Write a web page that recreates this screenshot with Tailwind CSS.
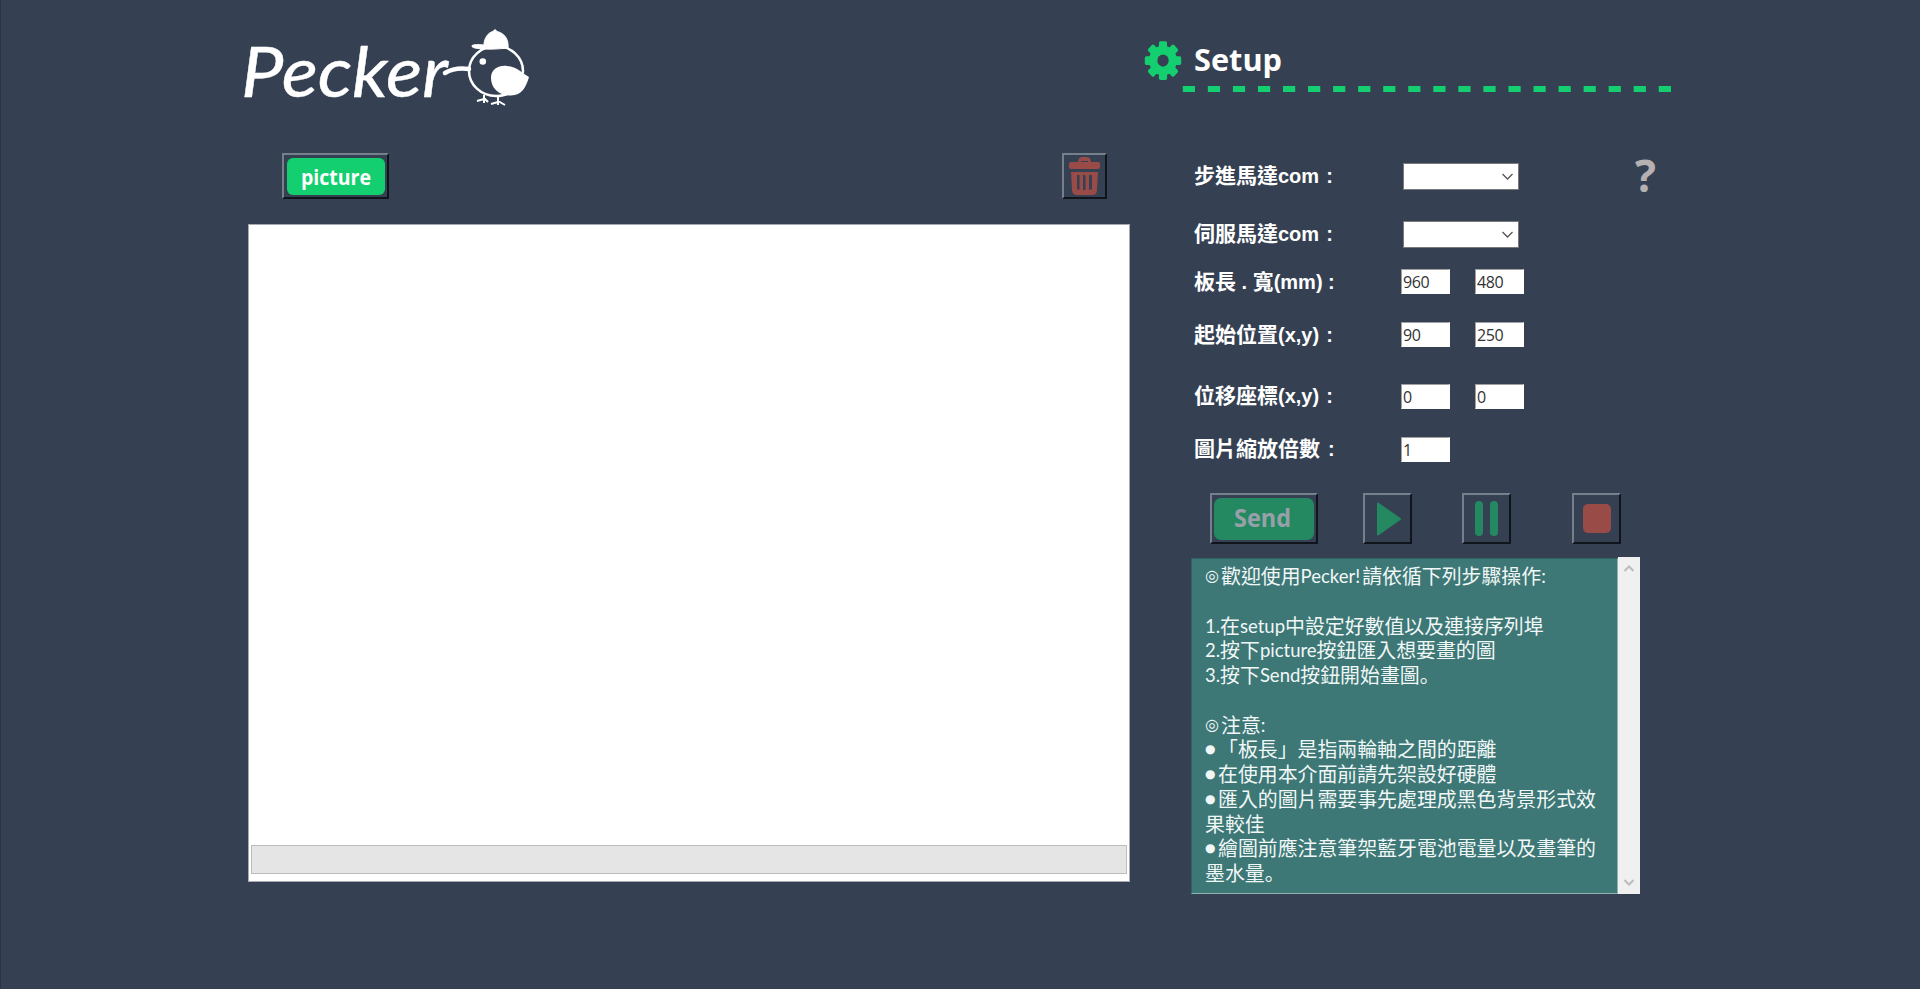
<!DOCTYPE html>
<html lang="zh-Hant">
<head>
<meta charset="utf-8">
<title>Pecker</title>
<script src="https://cdn.jsdelivr.net/npm/@tailwindcss/browser@4"></script>
</head>
<body class="w-[1920px] h-[989px] overflow-hidden bg-[#354153] border-l border-[#2a3444] font-['Liberation_Sans','Noto_Sans_CJK_TC',sans-serif]">
<div class="flex pl-[243px]">

  <!-- Canvas column -->
  <main class="w-[887px] pt-[24px]">
    <svg class="block w-[300px] h-[90px] overflow-visible" viewBox="244 24 300 90" fill="none" stroke="#fff" aria-label="Pecker">
      <text x="241" y="97" textLength="207" lengthAdjust="spacingAndGlyphs" font-family="Lato, sans-serif" font-style="italic" font-size="69" fill="#fff" stroke="#fff" stroke-width="0.400" stroke-linejoin="round">Pecker</text>
      <path d="M445 73 Q455 67 469 69" stroke-width="4.500" stroke-linecap="round"/>
      <ellipse cx="496" cy="71" rx="27" ry="25" stroke-width="2.500"/>
      <path d="M484 48 C483 38 489 32 493 31.500 Q495 28 497 31.500 C504 33 509 39 508 48 Q490 50 479 48.500 Q471 48 472 45.500 Q475 44 484 45Z" fill="#fff" stroke-width="1"/>
      <circle cx="482.800" cy="61.500" r="3.300" fill="#fff" stroke="none"/>
      <path d="M491 78 C491 69 499 65 507 66 C518 67 521 73 529 77 C526 87 522 95.500 511 95.500 C498 96 491 87 491 78Z" fill="#fff" stroke="none"/>
      <path d="M484 95v8M484 99l-7 2M484 98l4 4M498 96v9M498 102l-7 2M498 101l7 4" stroke-width="2"/>
    </svg>

    <div class="flex justify-between pt-[39px] pl-[38px] pr-[24px]">
      <button class="w-[107px] h-[46px] border-2 border-t-[#76808d] border-l-[#76808d] border-r-[#10151c] border-b-[#10151c] flex items-center justify-center">
        <svg class="block w-[98px] h-[37px]" viewBox="0 0 98 37"><rect width="98" height="37" rx="6" fill="#14cf6f"/><text x="14" y="26.500" textLength="70" lengthAdjust="spacingAndGlyphs" font-family="Open Sans, sans-serif" font-weight="700" font-size="21.500" fill="#fff">picture</text></svg>
      </button>
      <button class="w-[45px] h-[46px] border-2 border-t-[#76808d] border-l-[#76808d] border-r-[#10151c] border-b-[#10151c] flex items-center justify-center" aria-label="Delete">
        <svg class="block w-[31px] h-[38px]" viewBox="0 0 31 38" fill="#984b47"><path d="M9 6 Q9 0 13 0h5q4 0 4 6h-3V4h-7v2z"/><rect x="0" y="5" width="31" height="7" rx="2"/><path fill-rule="evenodd" d="M2 15H29L28 33Q28 38 23 38H8Q3 38 3 33ZM8 18V32l2.500 1V18ZM14 18V33h2.500V18ZM20 18V33l3-1V18Z"/></svg>
      </button>
    </div>

    <section class="mt-[25px] ml-[4px] w-[882px] h-[658px] bg-white border border-[#a5abb3] flex flex-col justify-end px-[2px] pb-[7px]">
      <div class="h-[29px] bg-[#e5e5e5] border border-[#bcbcbc]"></div>
    </section>
  </main>

  <!-- Setup column -->
  <aside class="w-[560px] pt-[36px] pl-[12px]">
    <svg class="block w-[530px] h-[60px]" viewBox="1143 36 530 60">
      <g transform="translate(1163 60.600) scale(1.070 1.140)" fill="#14cf6f">
        <rect x="-3.800" y="-17" width="7.600" height="34" rx="1.500"/><rect x="-3.800" y="-17" width="7.600" height="34" rx="1.500" transform="rotate(45)"/><rect x="-3.800" y="-17" width="7.600" height="34" rx="1.500" transform="rotate(90)"/><rect x="-3.800" y="-17" width="7.600" height="34" rx="1.500" transform="rotate(135)"/>
        <circle r="13"/><circle r="5.300" fill="#354153"/>
      </g>
      <text x="1194" y="71" textLength="88" lengthAdjust="spacingAndGlyphs" font-family="Open Sans, sans-serif" font-weight="700" font-size="31" fill="#fff">Setup</text>
      <path d="M1182.800 89H1672" stroke="#14cf6f" stroke-width="6" stroke-dasharray="12.200 12.850"/>
    </svg>

    <div class="flex h-[372px] pl-[51px] pt-[60px] text-white font-bold text-[20px] leading-[26px]">
      <div class="w-[207px] flex flex-col">
        <div class="h-[59px] pt-[7px]"><span class="text-[21px]">步進馬達</span>com<span class="pl-[7px]">:</span></div>
        <div class="h-[47px] pt-[6px]"><span class="text-[21px]">伺服馬達</span>com<span class="pl-[7px]">:</span></div>
        <div class="h-[53px] pt-[7px]"><span class="text-[21px]">板長</span> . <span class="text-[21px]">寬</span>(mm) :</div>
        <div class="h-[62px] pt-[7px]"><span class="text-[21px]">起始位置</span>(x,y)<span class="pl-[7px]">:</span></div>
        <div class="h-[53px] pt-[6px]"><span class="text-[21px]">位移座標</span>(x,y)<span class="pl-[7px]">:</span></div>
        <div class="h-[38px] pt-[6px]"><span class="text-[21px]">圖片縮放倍數</span><span class="pl-[8px]">:</span></div>
      </div>
      <div class="w-[234px] pt-[6px] flex flex-col font-normal font-['Open_Sans',sans-serif] text-[16px] text-[#333] leading-[24px]">
        <div class="h-[59px] pl-[2px]"><div class="w-[116px] h-[27px] mt-px bg-white border border-[#7a7a7a] flex items-center justify-end pr-[5px]"><svg class="w-[11px] h-[7px]" viewBox="0 0 11 7" fill="none" stroke="#555" stroke-width="1.300"><path d="M.5 1L5.500 6L10.500 1"/></svg></div></div>
        <div class="h-[48px] pl-[2px]"><div class="w-[116px] h-[27px] bg-white border border-[#7a7a7a] flex items-center justify-end pr-[5px]"><svg class="w-[11px] h-[7px]" viewBox="0 0 11 7" fill="none" stroke="#555" stroke-width="1.300"><path d="M.5 1L5.500 6L10.500 1"/></svg></div></div>
        <div class="h-[53px] flex gap-[25px]"><div class="w-[49px] h-[25px] bg-white border border-[#a0a0a0] border-b-white border-r-white pl-px tracking-[-0.4px]">960</div><div class="w-[49px] h-[25px] bg-white border border-[#a0a0a0] border-b-white border-r-white pl-px tracking-[-0.4px]">480</div></div>
        <div class="h-[62px] flex gap-[25px]"><div class="w-[49px] h-[25px] bg-white border border-[#a0a0a0] border-b-white border-r-white pl-px tracking-[-0.4px]">90</div><div class="w-[49px] h-[25px] bg-white border border-[#a0a0a0] border-b-white border-r-white pl-px tracking-[-0.4px]">250</div></div>
        <div class="h-[53px] flex gap-[25px]"><div class="w-[49px] h-[25px] bg-white border border-[#a0a0a0] border-b-white border-r-white pl-px">0</div><div class="w-[49px] h-[25px] bg-white border border-[#a0a0a0] border-b-white border-r-white pl-px">0</div></div>
        <div class="h-[25px] flex"><div class="w-[49px] h-[25px] bg-white border border-[#a0a0a0] border-b-white border-r-white pl-px">1</div></div>
      </div>
      <svg class="mt-px w-[22px] h-[38px] shrink-0 overflow-visible" viewBox="0 0 22 38"><text x="0" y="34.500" textLength="21" lengthAdjust="spacingAndGlyphs" font-family="Open Sans, sans-serif" font-weight="700" font-size="45" fill="#b5b1b2">?</text></svg>
    </div>

    <div class="flex items-start pl-[67px] pt-[25px] h-[90px]">
      <button class="w-[108px] h-[51px] border-2 border-t-[#76808d] border-l-[#76808d] border-r-[#10151c] border-b-[#10151c] flex items-center justify-center">
        <svg class="block w-[100px] h-[43px]" viewBox="0 0 100 43"><rect y="1" width="100" height="42" rx="7" fill="#248961"/><text x="20" y="30" textLength="57" lengthAdjust="spacingAndGlyphs" font-family="Open Sans, sans-serif" font-weight="700" font-size="25" fill="#98a0a9">Send</text></svg>
      </button>
      <button class="ml-[45px] w-[49px] h-[51px] border-2 border-t-[#76808d] border-l-[#76808d] border-r-[#10151c] border-b-[#10151c] flex items-center justify-center" aria-label="Play">
        <svg class="ml-[2px] w-[24px] h-[34px]" viewBox="0 0 24 34" fill="#248961" stroke="#248961" stroke-width="2" stroke-linejoin="round"><path d="M1 1.500L23 17L1 32.500Z"/></svg>
      </button>
      <button class="ml-[50px] w-[49px] h-[51px] border-2 border-t-[#76808d] border-l-[#76808d] border-r-[#10151c] border-b-[#10151c] flex items-center justify-center gap-[7px]" aria-label="Pause">
        <span class="w-[8px] h-[35px] rounded-full bg-[#248961]"></span><span class="w-[8px] h-[35px] rounded-full bg-[#248961]"></span>
      </button>
      <button class="ml-[61px] w-[49px] h-[51px] border-2 border-t-[#76808d] border-l-[#76808d] border-r-[#10151c] border-b-[#10151c] flex items-center justify-center" aria-label="Stop">
        <span class="ml-px w-[28px] h-[29px] -mt-px rounded-[5px] bg-[#984b47]"></span>
      </button>
    </div>

    <div class="ml-[48px] -mt-px w-[449px] h-[338px] flex">
      <div class="mt-px w-[427px] h-[336px] bg-[#3d7776] border border-t-[#2d6462] border-l-[#2d6462] border-b-[#8fb5b3] border-r-[#8fb5b3] pl-[13px] pt-[5px] text-[#f1f7f7] font-['Lato','Noto_Sans_CJK_TC',sans-serif] text-[18.5px] leading-[24.75px]">
        <div class="h-[24.75px] flex"><span class="w-[16px] text-[16px] font-['DejaVu_Sans']">◎</span><span class="text-[19.9px]">歡迎使用</span>Pecker!<span class="pl-[2px] text-[19.9px]">請依循下列步驟操作</span>:</div>
        <div class="h-[24.75px]"></div>
        <div class="h-[24.75px] flex">1.<span class="text-[19.9px]">在</span>setup<span class="text-[19.9px]">中設定好數值以及連接序列埠</span></div>
        <div class="h-[24.75px] flex">2.<span class="text-[19.9px]">按下</span>picture<span class="text-[19.9px]">按鈕匯入想要畫的圖</span></div>
        <div class="h-[24.75px] flex">3.<span class="text-[19.9px]">按下</span>Send<span class="text-[19.9px]">按鈕開始畫圖<span class="font-['Noto_Sans_CJK_JP']" lang="ja">。</span></span></div>
        <div class="h-[24.75px]"></div>
        <div class="h-[24.75px] flex"><span class="w-[16px] text-[16px] font-['DejaVu_Sans']">◎</span><span class="text-[19.9px]">注意</span>:</div>
        <div class="h-[24.75px] flex text-[19.9px]"><span class="w-[13px] text-[12px] font-['DejaVu_Sans']">●</span>「板長」是指兩輪軸之間的距離</div>
        <div class="h-[24.75px] flex text-[19.9px]"><span class="w-[13px] text-[12px] font-['DejaVu_Sans']">●</span>在使用本介面前請先架設好硬體</div>
        <div class="h-[24.75px] flex text-[19.9px]"><span class="w-[13px] text-[12px] font-['DejaVu_Sans']">●</span>匯入的圖片需要事先處理成黑色背景形式效</div>
        <div class="h-[24.75px] text-[19.9px]">果較佳</div>
        <div class="h-[24.75px] flex text-[19.9px]"><span class="w-[13px] text-[12px] font-['DejaVu_Sans']">●</span>繪圖前應注意筆架藍牙電池電量以及畫筆的</div>
        <div class="h-[24.75px] text-[19.9px]">墨水量<span class="font-['Noto_Sans_CJK_JP']" lang="ja">。</span></div>
      </div>
      <div class="w-[22px] h-[337px] bg-[#f0f0f0] flex flex-col items-center justify-between py-[8px]">
        <svg class="w-[10px] h-[7px]" viewBox="0 0 10 7" fill="none" stroke="#bcbcbc" stroke-width="2"><path d="M.5 6L5 1.500L9.500 6"/></svg>
        <svg class="w-[10px] h-[7px]" viewBox="0 0 10 7" fill="none" stroke="#bcbcbc" stroke-width="2"><path d="M.5 1L5 5.500L9.500 1"/></svg>
      </div>
    </div>
  </aside>
</div>
</body>
</html>
